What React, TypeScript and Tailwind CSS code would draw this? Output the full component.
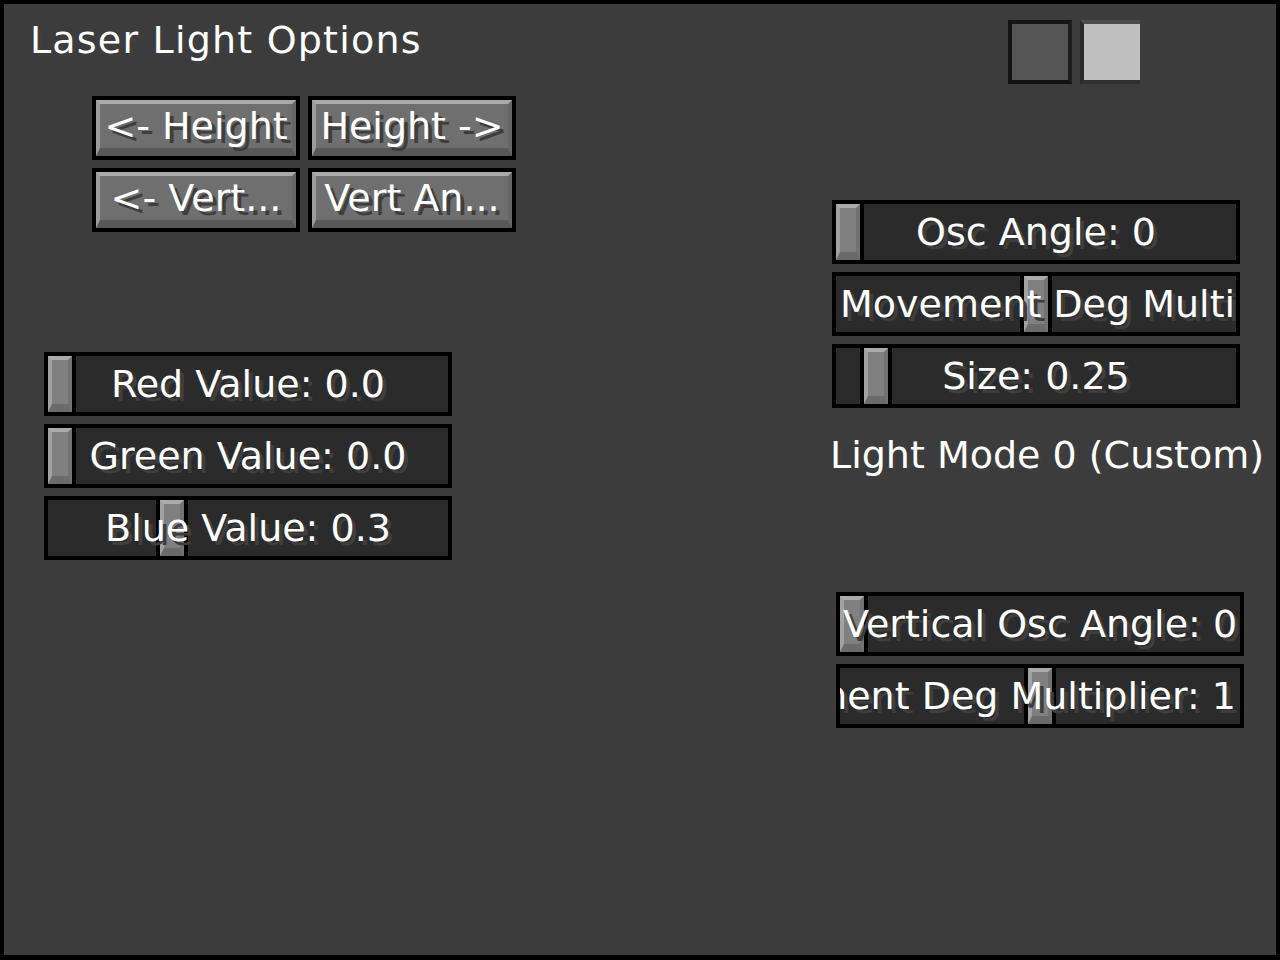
import React from 'react';

const shadow = '[text-shadow:4px_4px_0_#3e3e3e]';

function McButton({ label }: { label: string }) {
  return (
    <div className="w-[208px] h-[64px] bg-black p-[4px]">
      <div className="h-full flex items-center justify-center bg-[#6f6f6f] border-t-4 border-l-4 border-r-4 border-b-8 border-t-[#aaaaaa] border-l-[#9c9c9c] border-r-[#666666] border-b-[#585858]">
        <span className={`text-white text-[38px] leading-none whitespace-nowrap ${shadow}`}>{label}</span>
      </div>
    </div>
  );
}

function McSlider({
  label,
  handle,
  align = 'center',
  className = '',
}: {
  label: string;
  handle: number;
  align?: 'center' | 'start' | 'end';
  className?: string;
}) {
  const justify =
    align === 'center' ? 'justify-center' : align === 'start' ? 'justify-start pl-[4px]' : 'justify-end pr-[4px]';
  return (
    <div className={`w-[408px] h-[64px] bg-black p-[4px] ${className}`}>
      <div className="relative h-full bg-[#2b2b2b] overflow-hidden">
        {/* thumb */}
        <div className="absolute top-0 h-full flex" style={{ left: handle }}>
          <div className="w-[4px] h-full bg-black" />
          <div className="w-[24px] h-full bg-[#808080] border-t-4 border-l-4 border-r-4 border-b-8 border-t-[#ababab] border-l-[#a2a2a2] border-r-[#737373] border-b-[#6b6b6b]" />
          <div className="w-[4px] h-full bg-black" />
        </div>
        <div className={`relative h-full flex items-center ${justify}`}>
          <span className={`text-white text-[38px] leading-none whitespace-nowrap ${shadow}`}>{label}</span>
        </div>
      </div>
    </div>
  );
}

export default function App() {
  return (
    <div className="w-[1280px] h-[960px] bg-black pt-[4px] px-[4px] pb-[5px] font-['DejaVu_Sans',sans-serif]">
      <div className="h-full bg-[#3c3c3c]">
        {/* Header */}
        <div className="h-[92px] pt-[16px] flex items-start">
          <h1 className={`ml-[26px] mt-[1px] text-white text-[38px] leading-none tracking-[1.2px] whitespace-nowrap ${shadow}`}>
            Laser Light Options
          </h1>
          <div className="ml-auto mr-[136px] flex gap-2">
            <div className="w-[64px] h-[64px] bg-[#555555] border-4 border-[#121212] border-r-[#1e1e1e] border-t-[#151515]" />
            <div className="w-[60px] h-[64px] bg-[#c0c0c0] border-l-4 border-t-4 border-b-4 border-l-[#2a2a2a] border-t-[#4c4c4c] border-b-[#303030]" />
          </div>
        </div>

        {/* Body */}
        <div className="flex">
          {/* Left column */}
          <div className="w-[828px] pl-[40px]">
            <div className="ml-[48px] grid grid-cols-[208px_208px] gap-2">
              <McButton label="<- Height" />
              <McButton label="Height ->" />
              <McButton label="<- Vert..." />
              <McButton label="Vert An..." />
            </div>
            <div className="mt-[120px] flex flex-col gap-2">
              <McSlider label="Red Value: 0.0" handle={-4} />
              <McSlider label="Green Value: 0.0" handle={-4} />
              <McSlider label="Blue Value: 0.3" handle={108} />
            </div>
          </div>

          {/* Right column */}
          <div className="flex-1">
            <div className="mt-[104px] flex flex-col gap-2">
              <McSlider label="Osc Angle: 0" handle={-4} />
              <McSlider label="Movement Deg Multiplier: 1" handle={184} align="start" />
              <McSlider label="Size: 0.25" handle={24} />
            </div>
            <div className={`mt-[28px] -ml-[2px] text-white text-[38px] leading-none whitespace-nowrap ${shadow}`}>
              Light Mode 0 (Custom)
            </div>
            <div className="mt-[118px] ml-[4px] flex flex-col gap-2">
              <McSlider label="Vertical Osc Angle: 0" handle={-4} />
              <McSlider label="Movement Deg Multiplier: 1" handle={184} align="end" />
            </div>
          </div>
        </div>
      </div>
    </div>
  );
}
